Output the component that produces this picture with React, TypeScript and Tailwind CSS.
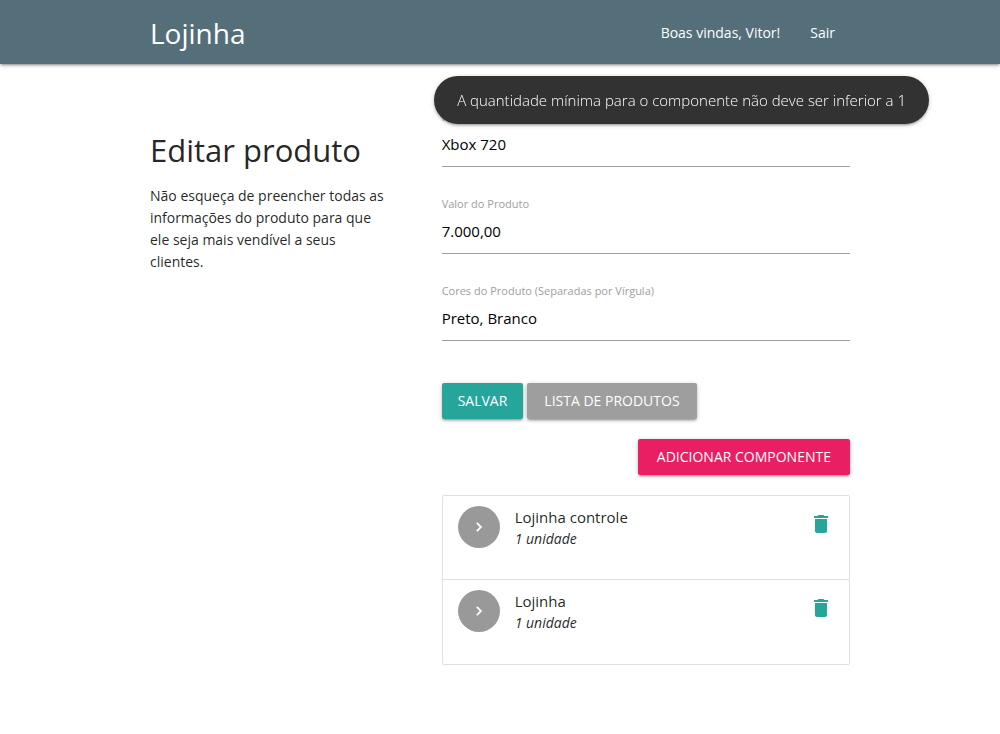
import { useState } from "react";

type Field = { id: string; label: string; value: string };

const fields: Field[] = [
  { id: "nome", label: "Nome do Produto", value: "Xbox 720" },
  { id: "valor", label: "Valor do Produto", value: "7.000,00" },
  { id: "cores", label: "Cores do Produto (Separadas por Vírgula)", value: "Preto, Branco" },
];

const components = [
  { name: "Lojinha controle", amount: "1 unidade" },
  { name: "Lojinha", amount: "1 unidade" },
];

const raised = "shadow-[0_2px_2px_0_rgba(0,0,0,0.14),0_3px_1px_-2px_rgba(0,0,0,0.12),0_1px_5px_0_rgba(0,0,0,0.2)]";
const button = `h-9 rounded-xs pb-[2px] text-[14px] uppercase text-white ${raised}`;

function ChevronRight() {
  return (
    <svg viewBox="0 0 24 24" className="size-[18px] fill-current stroke-current" aria-hidden="true">
      <path strokeWidth="0.6" d="M10 6L8.59 7.41 13.17 12l-4.58 4.59L10 18l6-6z" />
    </svg>
  );
}

function Trash() {
  return (
    <svg viewBox="0 0 24 24" className="size-6 fill-current" aria-hidden="true">
      <path d="M6 19c0 1.1.9 2 2 2h8c1.1 0 2-.9 2-2V7H6v12zM19 4h-3.5l-1-1h-5l-1 1H5v2h14V4z" />
    </svg>
  );
}

function TextField({ id, label, value }: Field) {
  const [text, setText] = useState(value);
  return (
    <div className="flex flex-col">
      <label htmlFor={id} className="text-[11px] leading-4 text-[#9e9e9e]">
        {label}
      </label>
      <input
        id={id}
        type="text"
        value={text}
        onChange={(e) => setText(e.target.value)}
        className="h-[42px] w-full border-b border-[#9e9e9e] bg-transparent pb-1 text-[15px] text-black outline-none"
      />
    </div>
  );
}

export default function App() {
  return (
    <div className="min-h-screen bg-white font-['Open_Sans',sans-serif] text-[14px] text-black/87">
      <header className={`bg-[#546e7a] text-white ${raised}`}>
        <nav className="mx-auto flex h-16 w-[70%] items-center justify-between">
          <a href="#inicio" className="pt-[2px] text-[28px]">
            Lojinha
          </a>
          <ul className="flex text-[14px]">
            <li>
              <a href="#perfil" className="px-[15px]">Boas vindas, Vitor!</a>
            </li>
            <li>
              <a href="#sair" className="px-[15px]">Sair</a>
            </li>
          </ul>
        </nav>
      </header>

      <main className="mx-auto flex w-[70%] pt-[45px] pb-16">
        <section className="w-5/12 pt-5 pr-14">
          <h1 className="text-[31px] leading-[42px]">Editar produto</h1>
          <p className="mt-[14px] leading-[22px]">
            Não esqueça de preencher todas as informações do produto para que ele seja mais vendível a seus
            clientes.
          </p>
        </section>

        <section className="w-7/12">
          <form className="flex flex-col gap-[29px]" onSubmit={(e) => e.preventDefault()}>
            {fields.map((f) => (
              <TextField key={f.id} {...f} />
            ))}
            <div className="mt-[13px] flex gap-1">
              <button type="submit" className={`bg-[#26a69a] px-4 ${button}`}>Salvar</button>
              <button type="button" className={`bg-[#9e9e9e] px-[17px] ${button}`}>Lista de produtos</button>
            </div>
          </form>

          <div className="mt-5 flex justify-end">
            <button type="button" className={`bg-[#e91e63] px-[19px] ${button}`}>Adicionar componente</button>
          </div>

          <ul className="mt-5 divide-y divide-[#e0e0e0] rounded-xs border border-[#e0e0e0]">
            {components.map((c) => (
              <li key={c.name} className="flex min-h-[84px] items-start py-[10px] pr-4 pl-[15px]">
                <span className="flex size-[42px] items-center justify-center rounded-full bg-[#999999] text-white">
                  <ChevronRight />
                </span>
                <div className="ml-[15px] flex-1 leading-[22px]">
                  <p className="text-[15px]">{c.name}</p>
                  <p className="italic">{c.amount}</p>
                </div>
                <button type="button" aria-label={`Remover ${c.name}`} className="mt-[6px] text-[#26a69a]">
                  <Trash />
                </button>
              </li>
            ))}
          </ul>
        </section>
      </main>

      <div
        role="status"
        className={`fixed top-[76px] right-[71px] flex h-12 items-center rounded-full bg-[#323232] px-[23px] text-[15px] font-light text-white ${raised}`}
      >
        A quantidade mínima para o componente não deve ser inferior a 1
      </div>
    </div>
  );
}
